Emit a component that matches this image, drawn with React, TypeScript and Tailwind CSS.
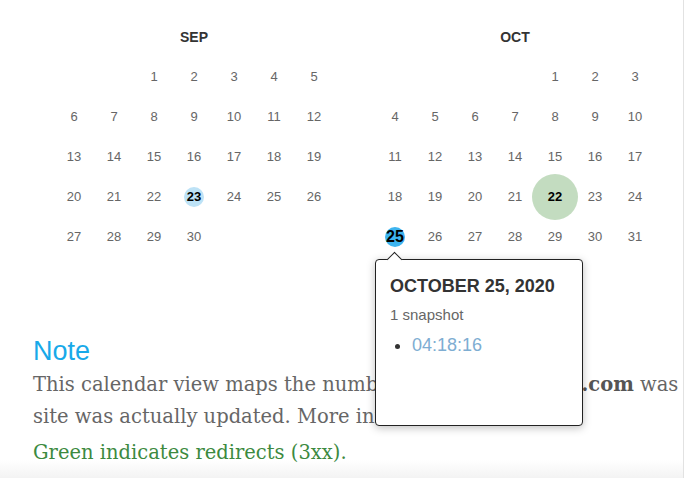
import type { ReactNode } from 'react';

type Mark = { kind: 'light' | 'green' | 'active' };

const sans = "font-['Liberation_Sans','Arimo',Arial,sans-serif]";

function Day({ n, mark, children }: { n: number | null; mark?: Mark; children?: ReactNode }) {
  if (n === null) return <div className="h-10 w-10" />;
  let circle = '';
  let text = 'text-[#666] text-[13px]';
  if (mark?.kind === 'light') {
    circle = 'w-[20px] h-[20px] bg-[#bde2f6]';
    text = 'text-black text-[13px] font-bold';
  } else if (mark?.kind === 'green') {
    circle = 'w-[46px] h-[46px] bg-[#c3dcc0]';
    text = 'text-black text-[13px] font-bold';
  } else if (mark?.kind === 'active') {
    circle = 'w-[20px] h-[20px] bg-[#3db4ef]';
    text = 'text-black text-[16px] font-bold';
  }
  return (
    <div className="relative flex h-10 w-10 items-center justify-center">
      {circle && <div className={`absolute rounded-full ${circle}`} />}
      <span className={`relative ${text}`}>{n}</span>
      {children}
    </div>
  );
}

function Month({ title, offset, days, marks, extra }: {
  title: string;
  offset: number;
  days: number;
  marks: Record<number, Mark>;
  extra?: Record<number, ReactNode>;
}) {
  const cells: (number | null)[] = [];
  for (let i = 0; i < offset; i++) cells.push(null);
  for (let d = 1; d <= days; d++) cells.push(d);
  return (
    <div className="w-[280px]">
      <div className="flex h-[20px] items-center justify-center text-[14px] font-bold text-[#333]">{title}</div>
      <div className="mt-[10px] grid grid-cols-7">
        {cells.map((n, i) => (
          <Day key={i} n={n} mark={n ? marks[n] : undefined}>
            {n && extra?.[n]}
          </Day>
        ))}
      </div>
    </div>
  );
}

// popup for the hovered day
function Tooltip() {
  return (
    <div className="absolute left-0 top-[42px] z-10 h-[167px] w-[208px] rounded-[4px] border border-[#222] bg-white px-[14px] pt-[15px] text-left shadow-[0_2px_8px_rgba(0,0,0,0.25)]">
      <div className="absolute left-[13px] top-[-6px] h-[11px] w-[11px] rotate-45 border-l border-t border-[#222] bg-white" />
      <div className="text-[18px] font-bold leading-[22px] text-[#333]">OCTOBER 25, 2020</div>
      <div className="mt-[9px] text-[15px] leading-[18px] text-[#666]">1 snapshot</div>
      <ul className="mt-[10px] list-disc pl-[22px] text-[#333]">
        <li className="text-[18px] leading-[22px]">
          <span className="text-[#7eadd2]">04:18:16</span>
        </li>
      </ul>
    </div>
  );
}

export default function App() {
  return (
    <div className={`relative h-[478px] w-[684px] overflow-hidden border-r border-[#e2e2e2] bg-white ${sans}`}>
      <div className="flex gap-[41px] pl-[54px] pt-[27px]">
        <Month title="SEP" offset={2} days={30} marks={{ 23: { kind: 'light' } }} />
        <Month
          title="OCT"
          offset={4}
          days={31}
          marks={{ 22: { kind: 'green' }, 25: { kind: 'active' } }}
          extra={{ 25: <Tooltip /> }}
        />
      </div>

      <div className="pl-[33px] pt-[78px]">
        <h3 className="text-[27px] leading-[32px] text-[#18a9e9]">Note</h3>
        <p className="mt-[2px] whitespace-nowrap font-['DejaVu_Serif',Georgia,serif] text-[19.5px] leading-[32px] text-[#666]">
          This calendar view maps the number of times <b className="text-[#555]">example.com</b> was crawled by the Wayback Machine, not how many times the
          <br />
          site was actually updated. More info in the <a className="text-[#2a9fd6]">FAQ</a>.
        </p>
        <p className="mt-[4px] whitespace-nowrap font-['DejaVu_Serif',Georgia,serif] text-[19.5px] leading-[32px] text-[#3c8a3f]">
          Green indicates redirects (3xx).
        </p>
      </div>

      <div className="pointer-events-none absolute bottom-0 left-0 h-[18px] w-full bg-gradient-to-b from-transparent to-[#f3f3f3]" />
    </div>
  );
}
